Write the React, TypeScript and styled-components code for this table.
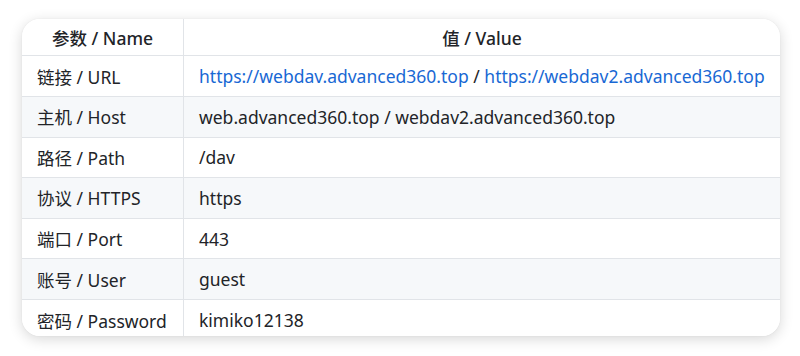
import React from "react";
import styled, { createGlobalStyle } from "styled-components";

const Global = createGlobalStyle`
  html, body { margin: 0; padding: 0; background: #ffffff; }
  body { font-family: "Noto Sans", "Noto Sans CJK SC", sans-serif; }
  *, *::before, *::after { box-sizing: border-box; }
`;

const Page = styled.div`
  width: 800px;
  height: 356px;
  padding: 19px 20px 0 22px;
`;

const Card = styled.div`
  width: 758px;
  height: 317px;
  border-radius: 18px;
  overflow: hidden;
  background: #ffffff;
  box-shadow: 0 3px 14px rgba(0, 0, 0, 0.16), 0 0 2px rgba(0, 0, 0, 0.06);
`;

const Row = styled.div<{ $shade?: boolean; $head?: boolean }>`
  display: grid;
  grid-template-columns: 162px 596px;
  height: ${(p) => (p.$head ? "37.4px" : "40.6px")};
  border-bottom: 1px solid #e1e4e8;
  background: ${(p) => (p.$shade ? "#f6f8fa" : "#ffffff")};
  &:last-child { border-bottom: none; }
`;

const Cell = styled.div<{ $head?: boolean; $first?: boolean }>`
  display: flex;
  align-items: center;
  justify-content: ${(p) => (p.$head ? "center" : "flex-start")};
  padding: 0 15px;
  border-right: ${(p) => (p.$first ? "1px solid #e1e4e8" : "none")};
  font-size: 17.5px;
  color: #222428;
  white-space: nowrap;
  font-weight: ${(p) => (p.$head ? 500 : 400)};
`;

const Text = styled.span`
  white-space: pre;
`;

const Link = styled.a`
  color: #1868d4;
  text-decoration: none;
`;

const rows: [string, React.ReactNode][] = [
  [
    "链接 / URL",
    <>
      <Link href="#">https://webdav.advanced360.top</Link>
      {" / "}
      <Link href="#">https://webdav2.advanced360.top</Link>
    </>,
  ],
  ["主机 / Host", "web.advanced360.top / webdav2.advanced360.top"],
  ["路径 / Path", "/dav"],
  ["协议 / HTTPS", "https"],
  ["端口 / Port", "443"],
  ["账号 / User", "guest"],
  ["密码 / Password", "kimiko12138"],
];

export default function App() {
  return (
    <Page>
      <Global />
      <Card>
        <Row $head>
          <Cell $head $first>
            <Text>参数 / Name</Text>
          </Cell>
          <Cell $head>
            <Text>值 / Value</Text>
          </Cell>
        </Row>
        {rows.map(([k, v], i) => (
          <Row key={i} $shade={i % 2 === 1}>
            <Cell $first>
              <Text>{k}</Text>
            </Cell>
            <Cell>
              <Text>{v}</Text>
            </Cell>
          </Row>
        ))}
      </Card>
    </Page>
  );
}
